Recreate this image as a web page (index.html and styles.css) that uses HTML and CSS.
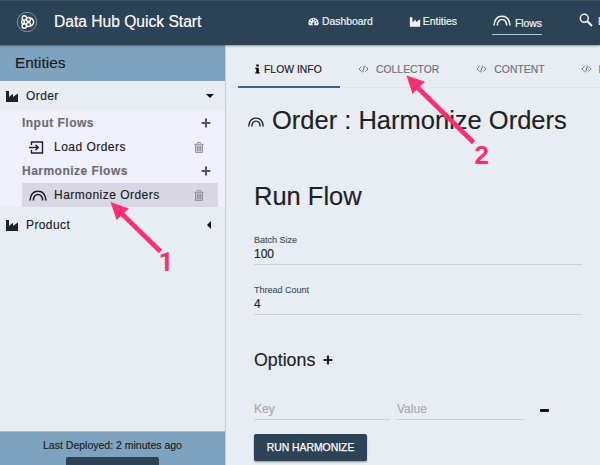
FILE: index.html
```html
<!DOCTYPE html>
<html lang="en">
<head>
<meta charset="utf-8">
<title>Data Hub Quick Start</title>
<link rel="stylesheet" href="styles.css">
</head>
<body>
<svg class="defs" aria-hidden="true">
  <symbol id="industry" viewBox="0 0 14 14"><path d="M1 2h3v6l4-3.200V8l4.500-3.200H13V13H1z"/></symbol>
  <symbol id="rainbow" viewBox="0 0 18 11"><path d="M1 10.500C1.500 4.500 4.500 1.200 9 1.200s7.500 3.300 8 9.300M4.300 10.500C4.600 6.500 6.300 4.500 9 4.500s4.400 2 4.700 6" fill="none" stroke="currentColor" stroke-width="1.500"/></symbol>
  <symbol id="code" viewBox="0 0 12 8"><path d="M3.800 1.200 1 4l2.800 2.800M8.200 1.200 11 4 8.200 6.800M7 .3 5 7.700" fill="none" stroke="currentColor"/></symbol>
  <symbol id="plus" viewBox="0 0 10 10"><path d="M5 .6v8.800M.6 5h8.800" fill="none" stroke="currentColor" stroke-width="2.100"/></symbol>
  <symbol id="trash" viewBox="0 0 10 11"><path d="M1.300 2.500h7.400v8H1.300z" fill="currentColor" fill-opacity=".35"/><path d="M3.300 1.700V.6h3.400v1.100M.3 2.300h9.400M1.500 2.500v7.900h7V2.500M3.500 4v5M5 4v5M6.500 4v5" fill="none" stroke="currentColor"/></symbol>
</svg>

<header class="topbar">
  <svg class="logo" viewBox="0 0 22 22"><circle cx="11" cy="11" r="9.700" fill="none" stroke="#8c9aa5" stroke-width=".9"/><g fill="none" stroke="#fff" stroke-width="1.400"><circle cx="8.300" cy="7" r="2.200"/><circle cx="8.300" cy="15" r="2.200"/><circle cx="7" cy="11" r="1.500"/><circle cx="12.500" cy="8.500" r="2"/><circle cx="12.500" cy="13.500" r="2"/><path d="m13.500 6.500 3 1.500 1.300 3-1.300 3-3 1.500"/></g></svg>
  <span class="brand">Data Hub Quick Start</span>
  <nav class="nav">
    <a class="nav-item dashboard"><svg viewBox="0 0 12 10"><path d="M1 9.300A5.700 5.700 0 1 1 11 9.300z" fill="currentColor"/><g fill="#2c4357"><circle cx="2.500" cy="6.500" r=".8"/><circle cx="3.600" cy="3.600" r=".8"/><circle cx="6" cy="2.500" r=".8"/><circle cx="8.500" cy="3.600" r=".8"/><circle cx="9.500" cy="6.500" r=".8"/><path d="m6.600 4 .7.2-.7 2.500a1.200 1.200 0 1 1-.8-.2z"/></g></svg>Dashboard</a>
    <a class="nav-item entities"><svg><use href="#industry"/></svg>Entities</a>
    <a class="nav-item flows"><svg><use href="#rainbow"/></svg>Flows</a>
    <a class="nav-item browse"><svg viewBox="0 0 14 14"><circle cx="5.300" cy="5.300" r="4" fill="none" stroke="currentColor" stroke-width="1.500"/><path d="m8.300 8.300 4.700 4.700" stroke="currentColor" stroke-width="2"/></svg>Browse Data</a>
  </nav>
</header>

<div class="body">
  <aside class="sidebar">
    <h2 class="side-title">Entities</h2>
    <div class="entity"><svg class="factory"><use href="#industry"/></svg><span>Order</span><i class="caret down"></i></div>
    <div class="flows-panel">
      <div class="group">Input Flows<svg class="plus"><use href="#plus"/></svg></div>
      <div class="flow"><svg class="flow-icon" viewBox="0 0 15 13"><path d="M2.500 4V1h11v11h-11V9M0 6.500h9M6.500 3.700l2.800 2.800-2.800 2.800" fill="none" stroke="currentColor" stroke-width="1.400"/></svg><span>Load Orders</span><svg class="trash"><use href="#trash"/></svg></div>
      <div class="group">Harmonize Flows<svg class="plus"><use href="#plus"/></svg></div>
      <div class="flow selected"><svg class="flow-icon arch"><use href="#rainbow"/></svg><span>Harmonize Orders</span><svg class="trash"><use href="#trash"/></svg></div>
    </div>
    <div class="entity product"><svg class="factory"><use href="#industry"/></svg><span>Product</span><i class="caret left"></i></div>
    <footer class="deployed"><span>Last Deployed: 2 minutes ago</span><div class="redeploy"></div></footer>
  </aside>

  <main class="main">
    <div class="tabs">
      <div class="tab active"><svg class="info" viewBox="0 0 5 10"><path d="M1.300.4h2.500v2H1.300zM.3 3.700h3.500v4.500h.9v1.400H.3V8.200h1V5.100h-1z"/></svg>FLOW INFO</div>
      <div class="tab collector"><svg class="code"><use href="#code"/></svg>COLLECTOR</div>
      <div class="tab content"><svg class="code"><use href="#code"/></svg>CONTENT</div>
      <div class="tab headers"><svg class="code"><use href="#code"/></svg>HEADERS</div>
    </div>
    <h1 class="title"><svg><use href="#rainbow"/></svg>Order : Harmonize Orders</h1>
    <section class="run">
      <h1 class="run-title">Run Flow</h1>
      <div class="field"><label>Batch Size</label><div class="value">100</div></div>
      <div class="field"><label>Thread Count</label><div class="value">4</div></div>
      <h3 class="options">Options<svg><use href="#plus"/></svg></h3>
      <div class="pair"><div class="key">Key</div><div class="val">Value</div><i class="minus"></i></div>
      <button class="run-button">RUN HARMONIZE</button>
    </section>
  </main>
</div>

<svg class="notes" viewBox="0 0 600 465">
  <path d="M160.500 251.500 120 212M473.500 142.500 417 87" stroke="#ff2e6e" stroke-width="4.600"/>
  <path d="m110.500 202 18.500 6.500-12.500 11.500zM406.500 75.500l18.500 6.300L412.500 94z" fill="#ff2e6e"/>
  <text class="one" x="158.500" y="271">1</text>
  <text x="474.500" y="163.500">2</text>
</svg>
</body>
</html>
```

FILE: styles.css
```css
* { box-sizing: border-box; }
body {
  margin: 0;
  width: 600px;
  height: 465px;
  overflow: hidden;
  position: relative;
  display: flex;
  flex-direction: column;
  background: #e8edf4;
  color: #202124;
  font: 12px "Liberation Sans", Arial, sans-serif;
  -webkit-text-stroke: .15px;
}
h1, h2, h3 { margin: 0; font-weight: 400; }
svg { flex: none; }
.defs { position: absolute; width: 0; height: 0; }

.topbar {
  flex: none;
  height: 45px;
  display: flex;
  align-items: center;
  padding: 0 0 3px 16px;
  background: #2c4357;
  border-top: 1px solid #3b5264;
  color: #fff;
  box-shadow: 0 1px 2px rgba(0, 0, 0, .4);
  z-index: 1;
}
.logo { width: 22px; height: 22px; }
.brand { width: 254px; margin-left: 16px; font-size: 15.6px; white-space: nowrap; }
.nav { display: flex; align-items: center; flex: 1; min-width: 0; overflow: hidden; height: 41px; font-size: 10.4px; color: #edf1f4; -webkit-text-stroke: .2px; }
.nav-item { display: flex; align-items: center; flex: none; white-space: nowrap; }
.dashboard svg { width: 11px; height: 9px; margin-right: 3px; }
.entities { margin-left: 36px; }
.entities svg { width: 12px; height: 13px; margin-right: 2px; fill: currentColor; }
.flows { margin-left: 35px; height: 24px; padding-top: 3px; border-bottom: 1px solid #b8c6ce; margin-top: 2px; }
.flows svg { width: 18px; height: 11px; margin: -6px 4px 0 1px; }
.browse { margin-left: 37px; }
.browse svg { width: 14px; height: 14px; margin: -3px 5px 0 0; }

.body { flex: 1; display: flex; min-height: 0; }
.sidebar { width: 226px; flex: none; display: flex; flex-direction: column; border-right: 1px solid #c9ced6; }
.side-title { height: 36px; padding-left: 15px; background: #7fa3bf; font-size: 15.4px; line-height: 36px; color: #17191c; }
.entity { height: 30px; display: flex; align-items: center; padding: 0 11px 0 5px; letter-spacing: .4px; background: #e8edf4; }
.product { height: 36px; }
.factory { width: 14px; height: 14px; margin-right: 7px; fill: #202124; }
.caret { margin-left: auto; border: 4px solid transparent; }
.down { border-top: 4px solid #111; border-bottom: 0; }
.left { border-right: 4px solid #111; border-left: 0; margin-right: 3px; }
.flows-panel { padding: 0 7px 0 22px; background: #f0effc; letter-spacing: .48px; }
.group { height: 24px; display: flex; align-items: center; justify-content: space-between; padding-right: 7px; font-weight: 700; color: #6c6c72; }
.plus { width: 10px; height: 10px; color: #555; }
.flow { height: 24px; display: flex; align-items: center; padding: 0 14px 0 7px; }
.flow-icon { width: 15px; height: 13px; margin-right: 10px; }
.arch { width: 18px; height: 11px; margin: 0 7px 0 0; }
.selected { background: #d8d6e3; }
.trash { width: 10px; height: 11px; margin-left: auto; color: #929298; }
.deployed { margin-top: auto; height: 34px; background: #7fa3bf; border-top: 1px solid #b5bbc2; display: flex; flex-direction: column; align-items: center; padding-top: 7px; font-size: 10.5px; line-height: 12px; overflow: hidden; }
.redeploy { width: 93px; height: 20px; flex: none; margin-top: 6px; background: #2c4357; border-radius: 2px; }

.main { flex: 1; min-width: 0; overflow: hidden; display: flex; flex-direction: column; }
.tabs { height: 43px; flex: none; display: flex; margin-left: 5px; border-bottom: 1px solid #dfe3e9; font-size: 10.4px; color: #6f7276; }
.tab { flex: none; height: 43px; display: flex; align-items: center; padding-top: 5px; white-space: nowrap; }
.active { width: 102px; margin-left: 7px; padding-left: 17px; color: #202124; border-bottom: 2px solid #40607c; padding-top: 7px; }
.info { width: 5px; height: 10px; margin-right: 4px; }
.code { width: 11px; height: 8px; margin-right: 7px; }
.collector { margin-left: 18px; }
.content { margin-left: 37px; }
.headers { margin-left: 36px; }
.title { display: flex; align-items: center; height: 30px; margin: 17px 0 0 21px; font-size: 25.5px; white-space: nowrap; }
.title svg { width: 18px; height: 10px; margin: 3px 7px 0 0; }
.run { padding-left: 28px; }
.run-title { margin-top: 46px; height: 30px; font-size: 25.5px; line-height: 30px; }
.field { width: 328px; height: 31px; border-bottom: 1px solid #ced2d7; margin-top: 19px; }
.run-title + .field { margin-top: 23px; }
.field label { display: block; font-size: 9px; line-height: 12px; color: #3c566b; }
.value { font-size: 12px; line-height: 15px; margin-top: 1px; }
.options { display: flex; align-items: center; margin-top: 34px; height: 22px; font-size: 17.8px; }
.options svg { width: 10px; height: 10px; margin-left: 8px; }
.pair { display: flex; align-items: center; margin-top: 29px; height: 20px; color: #a6a9ad; }
.key { width: 136px; margin-right: 7px; }
.val { width: 128px; }
.key, .val { height: 20px; line-height: 19px; border-bottom: 1px solid #ced2d7; }
.minus { width: 9px; height: 3px; margin-left: 15px; background: #111; border-radius: 1px; }
.run-button { display: block; width: 113px; height: 27px; margin-top: 14px; padding: 0; border: 0; border-radius: 2px; background: #2c4357; color: #fff; font: 10.4px "Liberation Sans", Arial, sans-serif; -webkit-text-stroke: .25px; box-shadow: 0 1px 2px rgba(0, 0, 0, .4); }
.notes { position: absolute; inset: 0; width: 600px; height: 465px; z-index: 2; pointer-events: none; font: 700 26px "Liberation Sans", Arial, sans-serif; fill: #ff2e6e; -webkit-text-stroke: 0; }
.one { font-family: Roboto, sans-serif; }
```
